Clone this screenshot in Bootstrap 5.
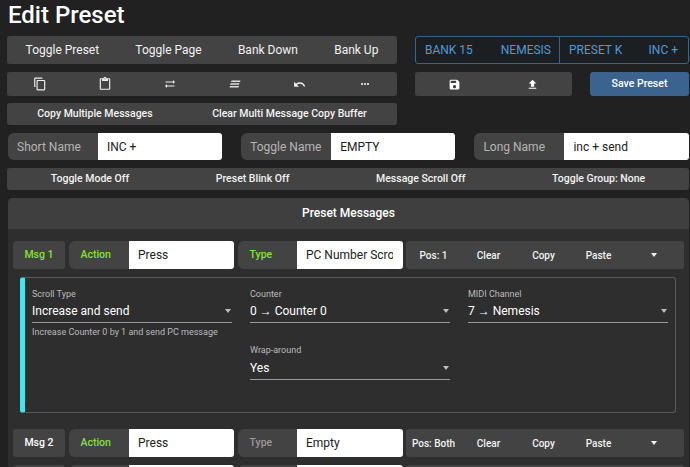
<!DOCTYPE html>
<html lang="en">
<head>
  <meta charset="UTF-8" />
  <meta name="viewport" content="width=device-width, initial-scale=1.0" />
  <title>Edit Preset</title>
  <link href="https://cdn.jsdelivr.net/npm/bootstrap@5.3.0/dist/css/bootstrap.min.css" rel="stylesheet" />
  <style>
    html, body { height: 467px; overflow: hidden; }
    body { background: #212121; color: #fff; font-family: Roboto, "Liberation Sans", sans-serif; }
    .page-wrap { padding: 0 1px 0 7px; }
    .page-title { font-family: Roboto, sans-serif; font-size: 24px; font-weight: 500; line-height: 30px; margin: 0 0 6px 1px; height: 30px; }

    .gray-btns { background: #434343; border-radius: 3px; }
    .gray-btns .btn { color: #f2f2f2; background: transparent; border: 0; padding: 0; font-weight: 400; }
    .row-a { height: 28px; }
    .row-a .btn { font-size: 12px; }
    .row-b { height: 24px; }
    .row-b .btn { display: flex; align-items: center; justify-content: center; }
    .row-c { height: 22px; }
    .row-c .btn { font-size: 10.5px; font-weight: 500; }
    .left-col { width: 390px; }
    .right-col { margin-left: 18px; width: 274px; }
    .gap-7 { margin-top: 7px; }

    .bank-box { height: 28px; border: 1px solid #35648c; border-radius: 3px; background: #1c1f22; }
    .bank-box .btn { color: #4c9bd8; font-size: 12px; border: 0; padding: 0; background: transparent; flex: 0 0 auto; }
    .bank-part { flex: 1 1 auto; justify-content: space-between; padding: 0 10px 0 9px; border-radius: 0; }
    .bank-part:first-child { flex: 0 0 143px; padding: 0 8px 0 9px; }
    .bank-part + .bank-part { border-left: 1px solid #35648c; }
    .save-btn { width: 99px; height: 24px; background: #3a648f; color: #fff; border: 0; border-radius: 3px; font-size: 10.5px; font-weight: 500; padding: 0; }

    .name-row { height: 27px; margin: 8px 0; gap: 18.9px; padding-left: 1px; }
    .name-row .input-group { width: 214.3px; }
    .name-label { width: 91px; background: #434343; border: 0; color: #b5b5b5; font-size: 12px; padding: 0 0 0 9px; }
    .name-row .form-control, .msg-row .form-control { border: 0; border-radius: 3px; color: #222; font-size: 12px; padding: 0 10px 0 9px; background: #fff; box-shadow: none; min-height: 0; }

    .presets-panel { background: #2e2e2e; border: 0; border-radius: 3px; margin: 8px 0 0 1px; color: #fff; }
    .presets-panel .card-header { height: 31px; padding: 0; background: #3f3f3f; border: 0; font-size: 12px; font-weight: 500; line-height: 31px; text-align: center; }
    .msg-row { height: 28px; padding: 0 5px; gap: 4px; margin-top: 12px; }
    .msg-box { width: 52px; background: #434343; border-radius: 3px; font-size: 10.5px; font-weight: 500; }
    .msg-row .input-group { height: 28px; flex-wrap: nowrap; width: 165px; }
    .msg-label { width: 61px; background: #434343; border: 0; font-size: 10.5px; font-weight: 500; padding: 0 0 0 11.5px; color: #9a9a9a; }
    .type-group .msg-label { width: 60px; }
    .is-on { color: #86e22e; }
    .tool-btns { width: 278px; height: 28px; margin-left: -1px; padding-right: 3px; }
    .tool-btns .btn { flex: 1 1 0; font-size: 10px; font-weight: 500; white-space: nowrap; }

    .msg-detail { background: #2e2e2e; margin: 8px 13px 0 12px; height: 136px; border: 1px solid #5a5a5a; border-left: 5px solid #3de8f0; border-radius: 3px; padding: 9.5px 7px 0 7px; }
    .field-grid { display: grid; grid-template-columns: repeat(3, 200px); column-gap: 18px; }
    .field-name { font-size: 9px; color: #bbb; line-height: 13px; }
    .fake-select { height: 22px; border-bottom: 1px solid #9a9a9a; font-size: 12px; line-height: 20px; }
    .sel-caret { width: 0; height: 0; border-left: 3.500px solid transparent; border-right: 3.500px solid transparent; border-top: 4px solid #bdbdbd; margin-right: 1px; }
    .msg-row .sel-caret { border-top-color: #f2f2f2; margin: 0; }
    .field-help { font-size: 9px; color: #bbb; line-height: 13px; margin-top: 3px; white-space: nowrap; }
    .field-wrap { margin-top: 5px; }
    .field-wrap .fake-select { height: 23px; }
    .msg-row.next-msg { margin-top: 16px; }
    .msg-row.last-msg { margin-top: 8px; }
  </style>
</head>

<body>
  <div class="page-wrap">
    <h1 class="page-title">Edit Preset</h1>

    <div class="d-flex align-items-start">
      <div class="left-col">
        <div class="btn-group w-100 gray-btns row-a">
          <button class="btn">Toggle Preset</button>
          <button class="btn">Toggle Page</button>
          <button class="btn">Bank Down</button>
          <button class="btn">Bank Up</button>
        </div>
        <div class="d-flex w-100 gray-btns row-b mt-2">
          <button class="btn flex-fill w-100"><svg width="14" height="14" viewBox="0 0 24 24" fill="#eee"><path d="M16 1H4c-1.100 0-2 .9-2 2v14h2V3h12V1zm3 4H8c-1.100 0-2 .9-2 2v14c0 1.100.9 2 2 2h11c1.100 0 2-.9 2-2V7c0-1.100-.9-2-2-2zm0 16H8V7h11v14z"/></svg></button>
          <button class="btn flex-fill w-100"><svg width="14" height="14" viewBox="0 0 24 24" fill="#eee"><path d="M19 2h-4.180C14.400.84 13.300 0 12 0c-1.300 0-2.400.84-2.820 2H5c-1.100 0-2 .9-2 2v16c0 1.100.9 2 2 2h14c1.100 0 2-.9 2-2V4c0-1.100-.9-2-2-2zm-7 0c.55 0 1 .45 1 1s-.45 1-1 1-1-.45-1-1 .45-1 1-1zm7 18H5V4h2v3h10V4h2v16z"/></svg></button>
          <button class="btn flex-fill w-100"><svg width="12" height="12" viewBox="0 0 24 24" fill="#eee"><path d="M22 8l-4-4v3H3v2h15v3l4-4zM2 16l4 4v-3h15v-2H6v-3l-4 4z"/></svg></button>
          <button class="btn flex-fill w-100"><svg width="12" height="12" viewBox="0 0 24 24" fill="#ddd"><path d="M5 5h18l-1 3H4zM3 10.500h18l-1 3H2zM2 16h18l-1 3H1z"/></svg></button>
          <button class="btn flex-fill w-100"><svg width="13" height="13" viewBox="0 0 24 24" fill="#eee"><path d="M12.500 8c-2.650 0-5.050.99-6.900 2.600L2 7v9h9l-3.620-3.620c1.390-1.160 3.160-1.880 5.120-1.880 3.540 0 6.550 2.310 7.600 5.500l2.370-.78C21.080 11.030 17.150 8 12.500 8z"/></svg></button>
          <button class="btn flex-fill w-100"><svg width="12" height="12" viewBox="0 0 24 24" fill="#eee"><path d="M6 10c-1.100 0-2 .9-2 2s.9 2 2 2 2-.9 2-2-.9-2-2-2zm12 0c-1.100 0-2 .9-2 2s.9 2 2 2 2-.9 2-2-.9-2-2-2zm-6 0c-1.100 0-2 .9-2 2s.9 2 2 2 2-.9 2-2-.9-2-2-2z"/></svg></button>
        </div>
        <div class="btn-group w-100 gray-btns row-c gap-7">
          <button class="btn">Copy Multiple Messages</button>
          <button class="btn">Clear Multi Message Copy Buffer</button>
        </div>
      </div>

      <div class="right-col">
        <div class="d-flex bank-box">
          <div class="btn-group bank-part">
            <button class="btn">BANK 15</button>
            <button class="btn">NEMESIS</button>
          </div>
          <div class="btn-group bank-part">
            <button class="btn">PRESET K</button>
            <button class="btn">INC +</button>
          </div>
        </div>
        <div class="d-flex justify-content-between mt-2">
          <div class="d-flex gray-btns row-b" style="width: 157px">
            <button class="btn flex-fill w-100"><svg width="13" height="13" viewBox="0 0 24 24" fill="#fff"><path d="M17 3H5c-1.110 0-2 .9-2 2v14c0 1.100.89 2 2 2h14c1.100 0 2-.9 2-2V7l-4-4zm-5 16c-1.660 0-3-1.340-3-3s1.340-3 3-3 3 1.340 3 3-1.340 3-3 3zm3-10H5V5h10v4z"/></svg></button>
            <button class="btn flex-fill w-100"><svg width="13" height="13" viewBox="0 0 24 24" fill="#fff"><path d="M9 16h6v-6h4l-7-7-7 7h4zm-4 2h14v2H5z"/></svg></button>
          </div>
          <button class="btn save-btn">Save Preset</button>
        </div>
      </div>
    </div>

    <div class="d-flex name-row">
      <div class="input-group">
        <span class="input-group-text name-label">Short Name</span>
        <input class="form-control" type="text" value="INC +" />
      </div>
      <div class="input-group">
        <span class="input-group-text name-label">Toggle Name</span>
        <input class="form-control" type="text" value="EMPTY" />
      </div>
      <div class="input-group">
        <span class="input-group-text name-label">Long Name</span>
        <input class="form-control" type="text" value="inc + send" />
      </div>
    </div>

    <div class="btn-group w-100 gray-btns row-c d-flex">
      <button class="btn">Toggle Mode Off</button>
      <button class="btn">Preset Blink Off</button>
      <button class="btn">Message Scroll Off</button>
      <button class="btn">Toggle Group: None</button>
    </div>

    <div class="card presets-panel">
      <div class="card-header">Preset Messages</div>

      <div class="d-flex msg-row">
        <div class="msg-box d-flex align-items-center justify-content-center is-on">Msg 1</div>
        <div class="input-group action-group">
          <span class="input-group-text msg-label is-on">Action</span>
          <input class="form-control" type="text" value="Press" />
        </div>
        <div class="input-group type-group">
          <span class="input-group-text msg-label is-on">Type</span>
          <input class="form-control" type="text" value="PC Number Scroll" />
        </div>
        <div class="d-flex gray-btns tool-btns">
          <button class="btn">Pos: 1</button>
          <button class="btn">Clear</button>
          <button class="btn">Copy</button>
          <button class="btn">Paste</button>
          <button class="btn d-flex align-items-center justify-content-center"><span class="sel-caret"></span></button>
        </div>
      </div>

      <div class="msg-detail">
        <div class="field-grid">
          <div>
            <div class="field-name">Scroll Type</div>
            <div class="fake-select d-flex justify-content-between align-items-center">Increase and send<span class="sel-caret"></span></div>
            <div class="field-help">Increase Counter 0 by 1 and send PC message</div>
          </div>
          <div>
            <div class="field-name">Counter</div>
            <div class="fake-select d-flex justify-content-between align-items-center">0 → Counter 0<span class="sel-caret"></span></div>
          </div>
          <div>
            <div class="field-name">MIDI Channel</div>
            <div class="fake-select d-flex justify-content-between align-items-center">7 → Nemesis<span class="sel-caret"></span></div>
          </div>
          <div></div>
          <div class="field-wrap">
            <div class="field-name">Wrap-around</div>
            <div class="fake-select d-flex justify-content-between align-items-center">Yes<span class="sel-caret"></span></div>
          </div>
        </div>
      </div>

      <div class="d-flex msg-row next-msg">
        <div class="msg-box d-flex align-items-center justify-content-center">Msg 2</div>
        <div class="input-group action-group">
          <span class="input-group-text msg-label is-on">Action</span>
          <input class="form-control" type="text" value="Press" />
        </div>
        <div class="input-group type-group">
          <span class="input-group-text msg-label">Type</span>
          <input class="form-control" type="text" value="Empty" />
        </div>
        <div class="d-flex gray-btns tool-btns">
          <button class="btn">Pos: Both</button>
          <button class="btn">Clear</button>
          <button class="btn">Copy</button>
          <button class="btn">Paste</button>
          <button class="btn d-flex align-items-center justify-content-center"><span class="sel-caret"></span></button>
        </div>
      </div>

      <div class="d-flex msg-row last-msg">
        <div class="msg-box"></div>
        <div class="input-group action-group">
          <span class="input-group-text msg-label"></span>
          <input class="form-control" type="text" value="" />
        </div>
        <div class="input-group type-group">
          <span class="input-group-text msg-label"></span>
          <input class="form-control" type="text" value="" />
        </div>
        <div class="d-flex gray-btns tool-btns"></div>
      </div>
    </div>
  </div>
  <script src="https://cdn.jsdelivr.net/npm/bootstrap@5.3.0/dist/js/bootstrap.bundle.min.js"></script>
</body>
</html>
